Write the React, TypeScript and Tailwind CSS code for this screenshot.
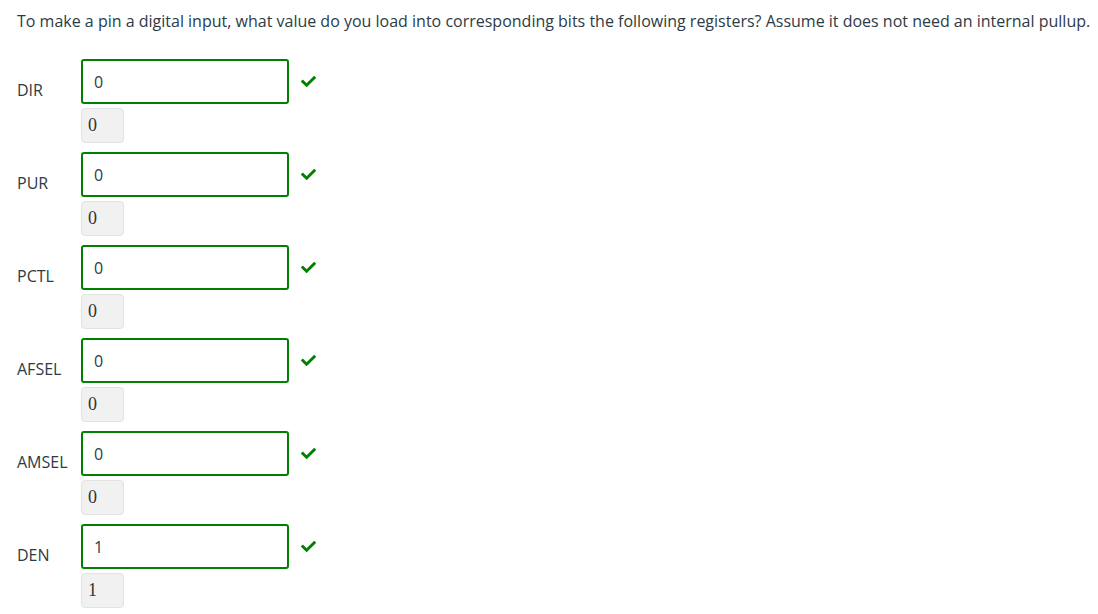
import { FaCheck } from 'react-icons/fa'

const rows = [
  { name: 'DIR', value: '0' },
  { name: 'PUR', value: '0' },
  { name: 'PCTL', value: '0' },
  { name: 'AFSEL', value: '0' },
  { name: 'AMSEL', value: '0' },
  { name: 'DEN', value: '1' },
]

function RegisterRow({ name, value }: { name: string; value: string }) {
  return (
    <div className="flex">
      <div className="w-[64px] shrink-0 pt-[19px] leading-[24px]">{name}</div>
      <div className="flex flex-col">
        <div className="flex items-center">
          <div className="flex h-[45px] w-[208px] items-center rounded-[3px] border-2 border-[#008000] bg-white pl-[11px] text-[#2d3b45]">
            {value}
          </div>
          <FaCheck className="ml-[11px] h-[15px] w-[17px] text-[#008000]" />
        </div>
        <div className="mt-[4px] flex h-[35px] w-[43px] items-center rounded-[4px] border border-[#e2e2e2] bg-[#f1f1f1] pl-[6px] text-[18px] text-[#333] [font-family:'Liberation_Serif',serif]">
          {value}
        </div>
      </div>
    </div>
  )
}

export default function App() {
  return (
    <div className="min-h-screen bg-white pl-[17px] pt-[9px] text-[16px] text-[#2d3b45] [font-family:'Open_Sans',sans-serif]">
      <p className="leading-[24px]">
        To make a pin a digital input, what value do you load into corresponding bits the following registers? Assume it does not need an internal pullup.
      </p>
      <div className="mt-[26px] flex flex-col gap-[9px]">
        {rows.map((r) => (
          <RegisterRow key={r.name} name={r.name} value={r.value} />
        ))}
      </div>
    </div>
  )
}
